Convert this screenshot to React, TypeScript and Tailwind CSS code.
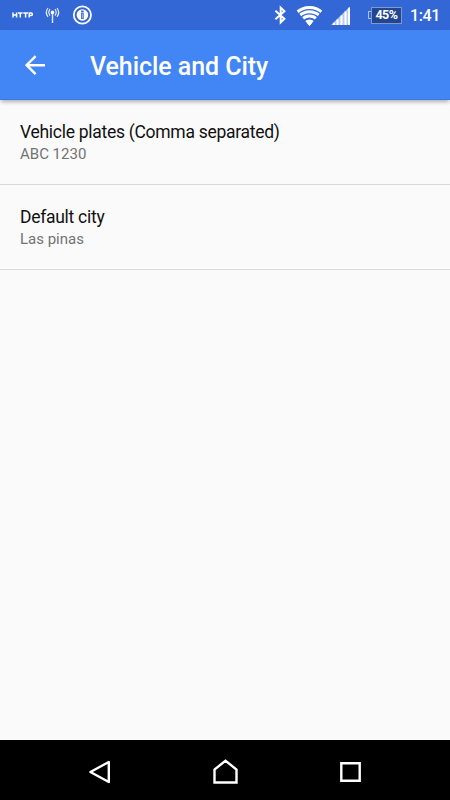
import React from 'react';

function StatusBar() {
  return (
    <div className="flex h-[30px] shrink-0 items-center bg-[#3367d6] text-white">
      <svg width="110" height="30" viewBox="0 0 110 30" fill="none" stroke="white">
        <g strokeWidth="1.5">
          <path d="M13 12.4v5M16.6 12.4v5M13 14.9h3.6" />
          <path d="M18 13.1h4.6M20.3 13v4.4M23.3 13.1h4.6M25.6 13v4.4" />
          <path d="M29.2 17.4v-4.3h2q1.2 0 1.2 1.2t-1.2 1.2h-2" />
        </g>
        <g strokeWidth="1.2" strokeOpacity=".85">
          <path d="M52.5 13v10" strokeWidth="1.4" />
          <circle cx="52.5" cy="12.4" r="1.3" fill="white" />
          <path d="M50 9.2q-2.4 3.2 0 6.4M55 9.2q2.4 3.2 0 6.4M48 8q-3.4 4.4 0 8.8M57 8q3.4 4.4 0 8.8" />
        </g>
        <circle cx="82.4" cy="15" r="8.6" strokeWidth="1.8" />
        <circle cx="82.4" cy="15" r="5.8" fill="white" stroke="none" />
        <path d="M82.4 10.5v1.7M82.4 12.7v6.2" stroke="#3367d6" strokeWidth="2.6" />
        <path d="M82.4 13.6v4.6" strokeWidth=".7" strokeOpacity=".7" />
      </svg>
      <svg className="ml-auto" width="95" height="30" viewBox="265 0 95 30" fill="none" stroke="white">
        <path d="M275.4 10.8l9 7.9-3.7 3.7V7.6l3.7 3.7-9 7.9" strokeWidth="2" />
        <clipPath id="wifi"><path d="M309.5 26L295.7 9.5Q309.5 0 323.2 9.5Z" /></clipPath>
        <g clipPath="url(#wifi)" strokeWidth="3">
          <circle cx="309.5" cy="26" r="18.5" />
          <circle cx="309.5" cy="26" r="14.3" />
          <circle cx="309.5" cy="26" r="10.1" />
          <circle cx="309.5" cy="26" r="3.4" fill="white" strokeWidth="6.4" />
        </g>
        <path d="M331 25L350 6.5V25z" fill="white" fillOpacity=".65" stroke="none" />
        <path d="M334 22.8V25M337.5 19.5V25M341.5 15.5V25M345.5 11.5V25M349 7.8V25" strokeWidth="2" />
      </svg>
      <div className="ml-2 flex h-[17px] w-[34px] items-center">
        <div className="h-[8px] w-[3px] border border-r-0 border-[#a8bde9]" />
        <div className="flex h-[17px] w-[31px] items-center justify-center border border-[#8198cd] bg-[#224791] text-[12.5px] font-bold tracking-[-0.5px]">
          45%
        </div>
      </div>
      <div className="ml-2 mr-[10px] mt-[2px] w-[30px] whitespace-nowrap text-[16px] font-medium leading-none tracking-[-0.4px]">1:41</div>
    </div>
  );
}

function Preference({ title, summary }: { title: string; summary: string }) {
  return (
    <div className="h-[85px] border-b border-[#d9d9d9] px-5 pt-[22px]">
      <div className="text-[17.5px] leading-[21px] tracking-[-0.28px] text-[#111111]">{title}</div>
      <div className="mt-px text-[15px] leading-[21px] text-[#737373]">{summary}</div>
    </div>
  );
}

export default function App() {
  return (
    <div className="flex h-[800px] w-[450px] flex-col overflow-hidden bg-[#fafafa] font-['Roboto',sans-serif]">
      <StatusBar />
      <header className="flex h-[70px] shrink-0 items-center border-b border-[#3b7ae2] bg-[#4285f4] text-white shadow-[0_3px_4px_-1px_rgba(0,0,0,0.3)]">
        <svg className="ml-[25px]" width="20" height="20" viewBox="0 0 20 20" fill="none" stroke="white" strokeWidth="2.4">
          <path d="M20 10.2H2.2M10.6 1.2L1.6 10.2l9 9" />
        </svg>
        <h1 className="ml-[45px] mt-[4px] text-[25px] font-medium leading-none tracking-[-0.06px]">Vehicle and City</h1>
      </header>
      <main className="flex-1">
        <Preference title="Vehicle plates (Comma separated)" summary="ABC 1230" />
        <Preference title="Default city" summary="Las pinas" />
      </main>
      <nav className="flex h-[60px] shrink-0 items-center bg-black">
        <svg width="450" height="60" viewBox="0 740 450 60" fill="none" stroke="white" strokeWidth="2.4">
          <path d="M108.8 762v20L90.4 772z" strokeLinejoin="round" />
          <path d="M214.5 782.5v-13l11-8.8 11 8.8v13z" />
          <path d="M341.3 763.2h18.4v17.6h-18.4z" />
        </svg>
      </nav>
    </div>
  );
}
